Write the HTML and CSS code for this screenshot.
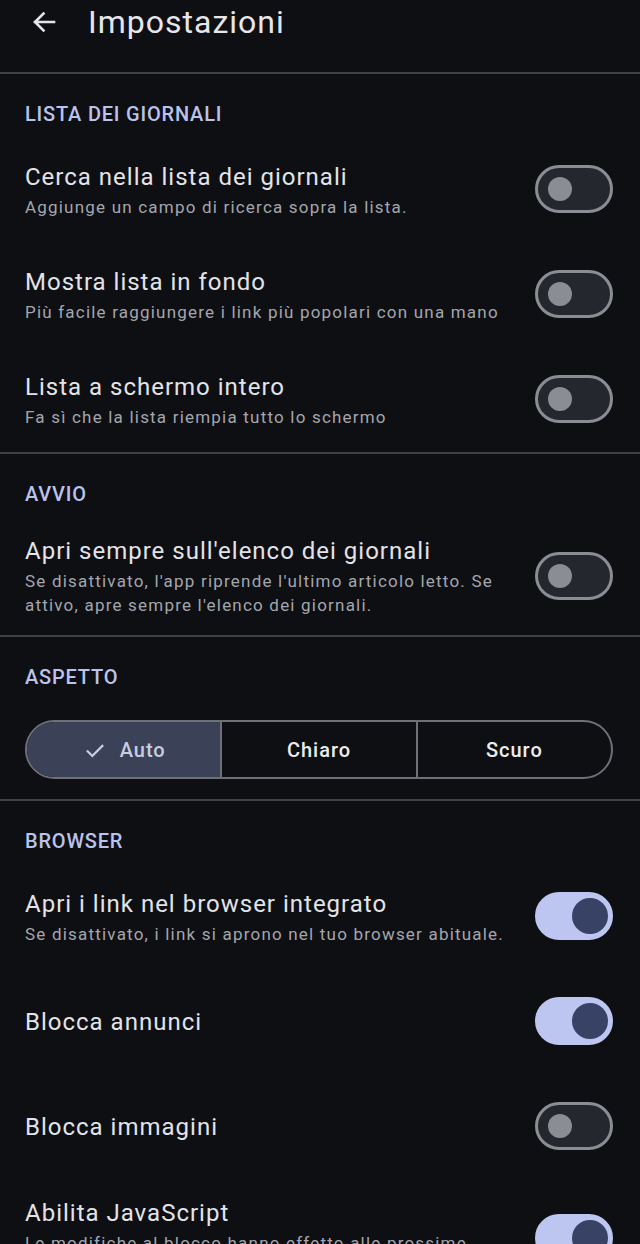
FILE: index.html
```html
<!DOCTYPE html>
<html lang="it">
<head>
    <meta charset="UTF-8">
    <meta name="viewport" content="width=device-width, initial-scale=1.0">
    <title>Impostazioni</title>
    <link rel="stylesheet" href="styles.css">
</head>
<body>
    <header class="topbar">
        <button class="back-button" aria-label="Indietro">
            <svg width="26" height="26" viewBox="0 0 26 26">
                <path d="M23 13H4M12.5 4.5L4 13l8.5 8.5" fill="none" stroke="#e4e4ea" stroke-width="2.6" stroke-linecap="square"/>
            </svg>
        </button>
        <h1>Impostazioni</h1>
    </header>

    <section class="group">
        <h2>LISTA DEI GIORNALI</h2>
        <div class="row">
            <div class="text">
                <div class="title">Cerca nella lista dei giornali</div>
                <div class="sub">Aggiunge un campo di ricerca sopra la lista.</div>
            </div>
            <span class="switch"></span>
        </div>
        <div class="row">
            <div class="text">
                <div class="title">Mostra lista in fondo</div>
                <div class="sub">Più facile raggiungere i link più popolari con una mano</div>
            </div>
            <span class="switch"></span>
        </div>
        <div class="row">
            <div class="text">
                <div class="title">Lista a schermo intero</div>
                <div class="sub">Fa sì che la lista riempia tutto lo schermo</div>
            </div>
            <span class="switch"></span>
        </div>
    </section>

    <section class="group">
        <h2>AVVIO</h2>
        <div class="row">
            <div class="text">
                <div class="title">Apri sempre sull'elenco dei giornali</div>
                <div class="sub">Se disattivato, l'app riprende l'ultimo articolo letto. Se attivo, apre sempre l'elenco dei giornali.</div>
            </div>
            <span class="switch"></span>
        </div>
    </section>

    <section class="group">
        <h2>ASPETTO</h2>
        <div class="segment-row">
            <div class="segmented">
                <button class="seg selected">
                    <svg width="26" height="26" viewBox="0 0 24 24"><path d="M4.5 12.5l5 5 10-10" fill="none" stroke="#c9cde0" stroke-width="2"/></svg>
                    Auto
                </button>
                <button class="seg">Chiaro</button>
                <button class="seg">Scuro</button>
            </div>
        </div>
    </section>

    <section class="group">
        <h2>BROWSER</h2>
        <div class="row">
            <div class="text">
                <div class="title">Apri i link nel browser integrato</div>
                <div class="sub">Se disattivato, i link si aprono nel tuo browser abituale.</div>
            </div>
            <span class="switch on"></span>
        </div>
        <div class="row">
            <div class="text">
                <div class="title">Blocca annunci</div>
            </div>
            <span class="switch on"></span>
        </div>
        <div class="row">
            <div class="text">
                <div class="title">Blocca immagini</div>
            </div>
            <span class="switch"></span>
        </div>
        <div class="row">
            <div class="text">
                <div class="title">Abilita JavaScript</div>
                <div class="sub">Le modifiche al blocco hanno effetto alle prossime aperture delle pagine.</div>
            </div>
            <span class="switch on"></span>
        </div>
    </section>
</body>
</html>
```

FILE: styles.css
```css
body {
    font-family: Roboto, "Noto Sans", sans-serif;
    margin: 0;
    padding: 0;
    background-color: #0e0f13;
    color: #e3e3e8;
    overflow: hidden;
}
.topbar {
    height: 74px;
    display: flex;
    align-items: flex-start;
    border-bottom: 2px solid #3f4147;
    box-sizing: border-box;
}
.back-button {
    width: 26px;
    height: 26px;
    margin: 9px 0 0 31px;
    padding: 0;
    background: none;
    border: none;
}
.topbar h1 {
    margin: 0 0 0 31px;
    font-size: 32px;
    font-weight: 400;
    line-height: 44px;
    letter-spacing: 1px;
    color: #e6e6ec;
}
.group {
    border-bottom: 2px solid #3f4147;
}
.group:last-child {
    border-bottom: none;
}
.group h2 {
    margin: 0;
    padding: 28px 25px 11px;
    font-size: 20px;
    line-height: 24px;
    font-weight: 500;
    letter-spacing: 0.8px;
    color: #bac3eb;
}
.row {
    min-height: 105px;
    box-sizing: border-box;
    display: flex;
    align-items: center;
    padding: 17px 27px 18px 25px;
    gap: 24px;
}
.text {
    flex: 1;
    padding-top: 2px;
}
.title {
    font-size: 24px;
    line-height: 30px;
    letter-spacing: 1px;
}
.sub {
    margin-top: 3px;
    font-size: 17px;
    line-height: 24px;
    color: #a4a6ad;
    letter-spacing: 1.2px;
}
.switch {
    position: relative;
    width: 78px;
    height: 48px;
    box-sizing: border-box;
    border: 3px solid #8a8d94;
    border-radius: 24px;
    background-color: #25272e;
    flex-shrink: 0;
}
.switch::after {
    content: "";
    position: absolute;
    left: 10px;
    top: 9px;
    width: 24px;
    height: 24px;
    border-radius: 50%;
    background-color: #8a8d94;
}
.switch.on {
    border-color: #bdc6f0;
    background-color: #bdc6f0;
}
.switch.on::after {
    left: 34px;
    top: 3px;
    width: 36px;
    height: 36px;
    background-color: #384264;
}
.segment-row {
    padding: 20px 27px 20px 25px;
}
.segmented {
    display: flex;
    height: 59px;
    border: 2px solid #6e7077;
    border-radius: 30px;
    overflow: hidden;
    box-sizing: border-box;
}
.seg {
    flex: 1;
    display: flex;
    align-items: center;
    justify-content: center;
    gap: 12px;
    background: none;
    border: none;
    border-left: 2px solid #6e7077;
    color: #ececf0;
    font-family: Roboto, sans-serif;
    font-size: 20px;
    font-weight: 500;
    letter-spacing: 1px;
}
.seg:first-child {
    border-left: none;
}
.seg.selected {
    background-color: #3b4157;
    color: #c9cde0;
}
```
